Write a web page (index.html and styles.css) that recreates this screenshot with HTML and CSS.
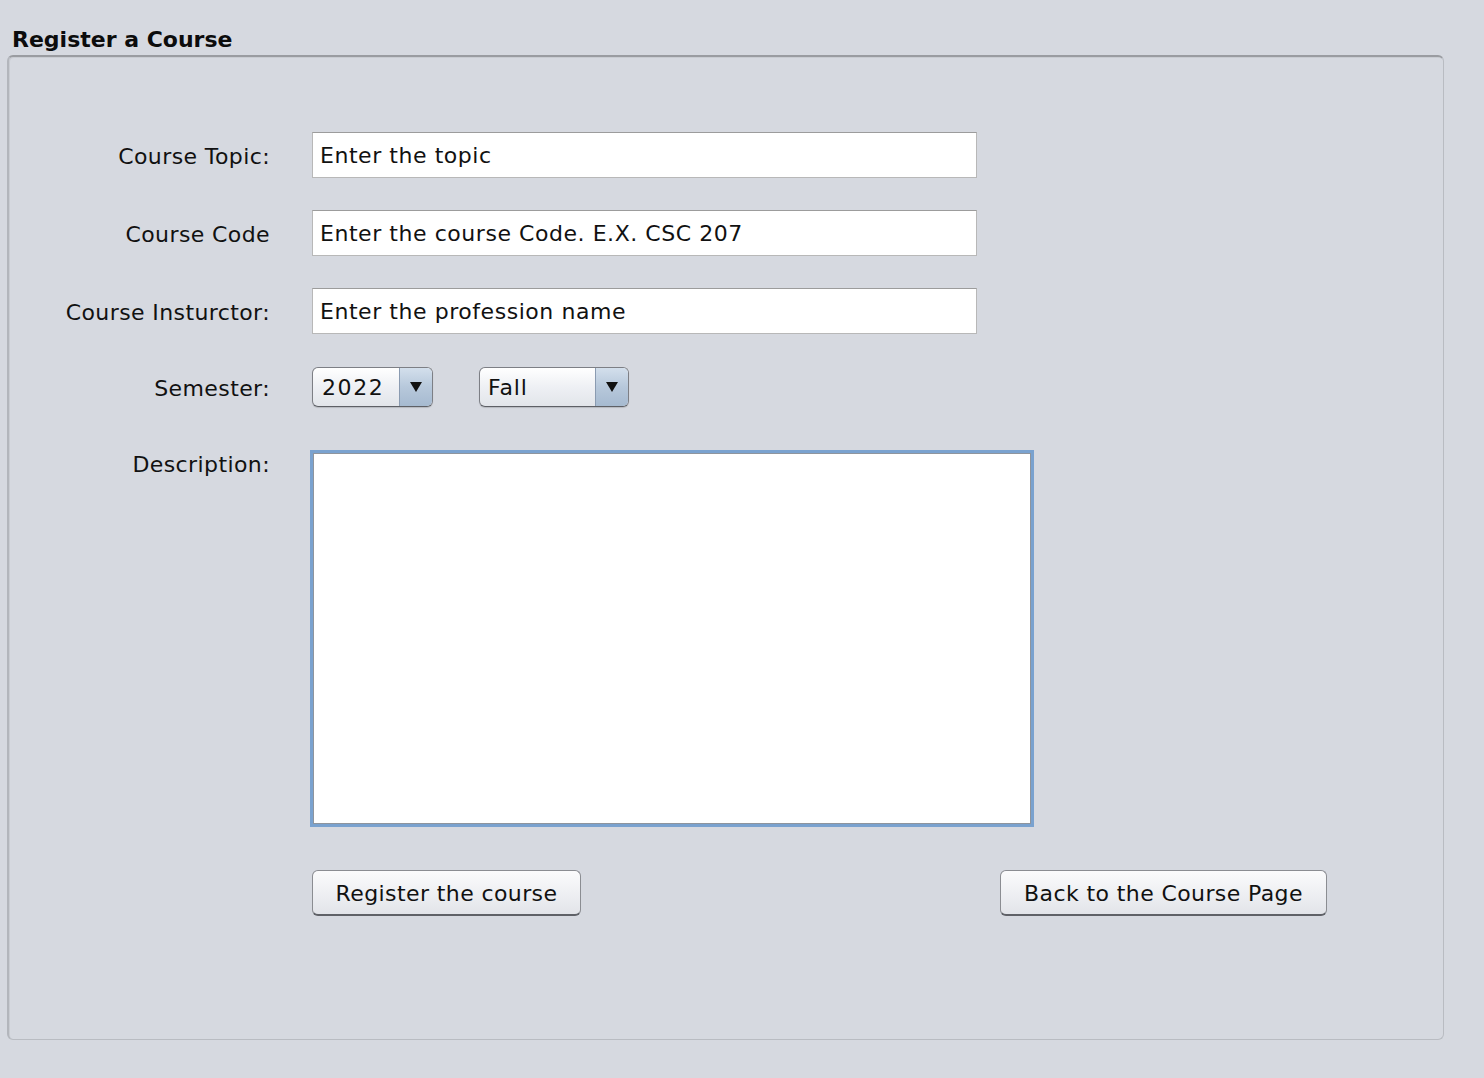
FILE: index.html
```html
<!DOCTYPE html>
<html>
<head>
<meta charset="utf-8">
<link rel="stylesheet" href="styles.css">
</head>
<body>
<div class="title">Register a Course</div>
<div class="panel">
  <div class="row r-text">
    <div class="label">Course Topic:</div>
    <div class="field">Enter the topic</div>
  </div>
  <div class="row r-text">
    <div class="label">Course Code</div>
    <div class="field">Enter the course Code. E.X. CSC 207</div>
  </div>
  <div class="row r-text">
    <div class="label">Course Insturctor:</div>
    <div class="field">Enter the profession name</div>
  </div>
  <div class="row r-combo">
    <div class="label">Semester:</div>
    <div class="combo c-year"><span class="cval">2022</span><span class="carrow"></span></div>
    <div class="combo c-sem"><span class="cval">Fall</span><span class="carrow"></span></div>
  </div>
  <div class="row r-desc">
    <div class="label dlabel">Description:</div>
    <div class="textarea"></div>
  </div>
  <div class="row r-btn">
    <div class="label"></div>
    <div class="btn b-reg">Register the course</div>
    <div class="btn b-back">Back to the Course Page</div>
  </div>
</div>
</body>
</html>
```

FILE: styles.css
```css
html, body {
  margin: 0;
  padding: 0;
  background: #d6d9e0;
  font-family: "DejaVu Sans", "Liberation Sans", sans-serif;
  color: #111;
}
body {
  width: 1484px;
  height: 1078px;
  overflow: hidden;
}
.title {
  height: 55px;
  box-sizing: border-box;
  padding: 25px 0 0 12px;
  font-size: 22px;
  font-weight: bold;
  line-height: 30px;
  color: #0c0c0c;
}
.panel {
  margin-left: 7px;
  width: 1437px;
  height: 985px;
  box-sizing: border-box;
  border: 1px solid #b9bcc2;
  border-top: 2px solid #9a9ca1;
  border-left: 2px solid #b3b6bc;
  border-radius: 6px;
  padding-top: 75px;
  box-shadow: inset 1px 1px 0 #c9ccd2;
  display: flex;
  flex-direction: column;
}
.row {
  display: flex;
  align-items: center;
  flex: none;
}
.label {
  width: 261px;
  flex: none;
  text-align: right;
  font-size: 22px;
  letter-spacing: 0.4px;
  margin-right: 42px;
  padding-top: 2px;
  color: #111;
}
.r-text {
  height: 46px;
  margin-bottom: 32px;
}
.field {
  width: 665px;
  height: 46px;
  box-sizing: border-box;
  background: #fff;
  border: 1px solid #b8b8b8;
  border-top-color: #9c9c9c;
  padding-left: 7px;
  font-size: 22px;
  letter-spacing: 0.55px;
  line-height: 46px;
  color: #111;
}
.r-combo {
  height: 40px;
  margin-top: 1px;
  margin-bottom: 43px;
}
.combo {
  height: 40px;
  box-sizing: border-box;
  border: 1px solid #7d7f85;
  border-bottom-color: #5e6066;
  border-radius: 6px;
  background: linear-gradient(#ffffff, #eef0f4 50%, #e2e5ea);
  display: flex;
  overflow: hidden;
  box-shadow: 0 1px 1px rgba(0,0,0,0.15);
}
.c-year { width: 121px; }
.c-sem { width: 150px; margin-left: 46px; }
.cval {
  flex: 1;
  font-size: 22px;
  line-height: 40px;
  padding-left: 9px;
  letter-spacing: 1.6px;
  color: #111;
}
.c-sem .cval { letter-spacing: 0.8px; padding-left: 8px; }
.carrow {
  width: 32px;
  flex: none;
  border-left: 1px solid #8a9bb1;
  background: linear-gradient(#d3dfec, #b7c8db 50%, #a6bad0);
  position: relative;
}
.carrow::after {
  content: "";
  position: absolute;
  left: 10px;
  top: 14px;
  border-left: 6px solid transparent;
  border-right: 6px solid transparent;
  border-top: 10px solid #111;
}
.r-desc {
  align-items: flex-start;
  margin-bottom: 43px;
}
.dlabel {
  margin-top: 0px;
  line-height: 26px;
}
.textarea {
  margin-left: -2px;
  width: 724px;
  height: 377px;
  box-sizing: border-box;
  background: #fff;
  border: 3px solid #7aa2cf;
  box-shadow: inset 1px 1px 0 #8f959d, inset -1px -1px 0 #8f959d;
}
.r-btn {
  height: 46px;
}
.btn {
  height: 46px;
  box-sizing: border-box;
  border: 1px solid #8b8d92;
  border-bottom: 2px solid #5f6167;
  border-radius: 6px;
  background: linear-gradient(#fbfbfc, #f0f1f4 45%, #e2e4e9);
  font-size: 22px;
  letter-spacing: 0.4px;
  line-height: 45px;
  text-align: center;
  color: #111;
}
.b-reg { width: 269px; }
.b-back { width: 327px; margin-left: 419px; }
```
